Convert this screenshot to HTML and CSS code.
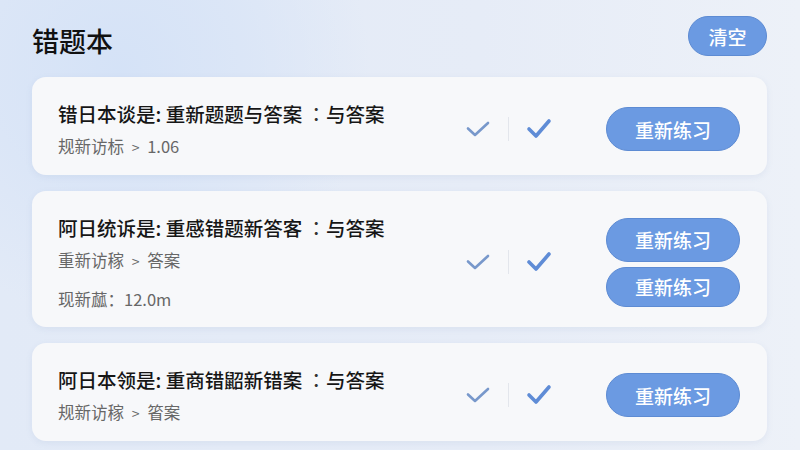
FILE: index.html
```html
<!DOCTYPE html>
<html lang="zh-CN">
<head>
    <meta charset="UTF-8">
    <meta name="viewport" content="width=device-width, initial-scale=1.0">
    <title>错题本</title>
    <link rel="stylesheet" href="styles.css">
</head>
<body>
    <div class="page">
        <div class="header">
            <h1>错题本</h1>
            <button class="btn clear-btn">清空</button>
        </div>

        <div class="card">
            <div class="info">
                <p class="q-title">错日本谈是: 重新题题与答案 <span class="odd">∶</span>与答案</p>
                <p class="q-sub">规新访标 <span class="arrow">&gt;</span> 1.06</p>
            </div>
            <div class="marks">
                <svg class="tick light" viewBox="0 0 24 18"><path d="M2 8.5 L9 15 L22 3"/></svg>
                <span class="sep"></span>
                <svg class="tick bold" viewBox="0 0 26 22"><path d="M3 11 L10 18 L23 3"/></svg>
            </div>
            <div class="actions">
                <button class="btn redo-btn">重新练习</button>
            </div>
        </div>

        <div class="card">
            <div class="info">
                <p class="q-title">阿日统诉是: 重感错题新答客 <span class="odd">∶</span>与答案</p>
                <p class="q-sub">重新访稼 <span class="arrow">&gt;</span> 答案</p>
                <p class="q-sub extra">现新蓏：12.0m</p>
            </div>
            <div class="marks">
                <svg class="tick light" viewBox="0 0 24 18"><path d="M2 8.5 L9 15 L22 3"/></svg>
                <span class="sep"></span>
                <svg class="tick bold" viewBox="0 0 26 22"><path d="M3 11 L10 18 L23 3"/></svg>
            </div>
            <div class="actions">
                <button class="btn redo-btn">重新练习</button>
                <button class="btn redo-btn short">重新练习</button>
            </div>
        </div>

        <div class="card">
            <div class="info">
                <p class="q-title">阿日本领是: 重商错鼦新错案 <span class="odd">∶</span>与答案</p>
                <p class="q-sub">规新访稼 <span class="arrow">&gt;</span> 箵案</p>
            </div>
            <div class="marks">
                <svg class="tick light" viewBox="0 0 24 18"><path d="M2 8.5 L9 15 L22 3"/></svg>
                <span class="sep"></span>
                <svg class="tick bold" viewBox="0 0 26 22"><path d="M3 11 L10 18 L23 3"/></svg>
            </div>
            <div class="actions">
                <button class="btn redo-btn">重新练习</button>
            </div>
        </div>
    </div>
</body>
</html>
```

FILE: styles.css
```css
* {
    box-sizing: border-box;
}
html, body {
    height: 100%;
}
body {
    margin: 0;
    font-family: "Noto Sans CJK SC", "Noto Sans", sans-serif;
    color: #1c1c1e;
    background:
        radial-gradient(circle at 120px 70px, rgba(212, 226, 247, 0.95) 0, rgba(214, 227, 247, 0.6) 130px, rgba(214, 227, 247, 0) 250px),
        linear-gradient(90deg, #e2eaf7 0%, #e6ecf7 60%, #edf1f8 100%);
    overflow: hidden;
}
.page {
    padding: 16px 33px 0 32px;
}
.header {
    display: flex;
    justify-content: space-between;
    align-items: flex-start;
    margin-bottom: 20px;
}
h1 {
    margin: 9px 0 0 0;
    font-size: 27px;
    line-height: 32px;
    font-weight: 500;
    color: #111;
}
.btn {
    border: 1px solid #5d8bd3;
    border-radius: 22px;
    background: #6b9ae2;
    color: #fff;
    font-family: inherit;
    font-weight: 500;
    cursor: pointer;
    padding: 0;
}
.clear-btn {
    width: 79px;
    height: 40px;
    font-size: 19px;
}
.card {
    display: flex;
    align-items: center;
    background: #f7f8fa;
    border-radius: 14px;
    padding: 24px 27px 18px 26px;
    margin-bottom: 16px;
    box-shadow: 0 2px 6px rgba(120, 145, 190, 0.12);
}
.info {
    flex: 1;
    align-self: flex-start;
}
.info p {
    margin: 0;
}
.q-title {
    font-size: 19.5px;
    line-height: 26px;
    font-weight: 500;
    color: #161616;
    white-space: nowrap;
}
.odd {
    color: #333;
}
.q-sub {
    margin-top: 9px !important;
    font-size: 16.5px;
    line-height: 20px;
    color: #676767;
}
.q-sub.extra {
    margin-top: 18px !important;
}
.arrow {
    font-size: 14px;
    margin: 0 4px;
}
.marks {
    display: flex;
    align-items: center;
    margin-right: 54px;
}
.tick {
    fill: none;
    stroke-linecap: round;
    stroke-linejoin: round;
}
.tick.light {
    width: 24px;
    height: 18px;
    stroke: #7898cb;
    stroke-width: 2.6;
}
.tick.bold {
    width: 26px;
    height: 22px;
    stroke: #5f8cd6;
    stroke-width: 3.6;
}
.sep {
    width: 1px;
    height: 24px;
    background: #e3e6ec;
    margin: 0 17px 0 18px;
}
.actions {
    display: flex;
    flex-direction: column;
    gap: 5px;
}
.redo-btn {
    width: 134px;
    height: 44px;
    font-size: 19px;
}
.redo-btn.short {
    height: 40px;
}
```
